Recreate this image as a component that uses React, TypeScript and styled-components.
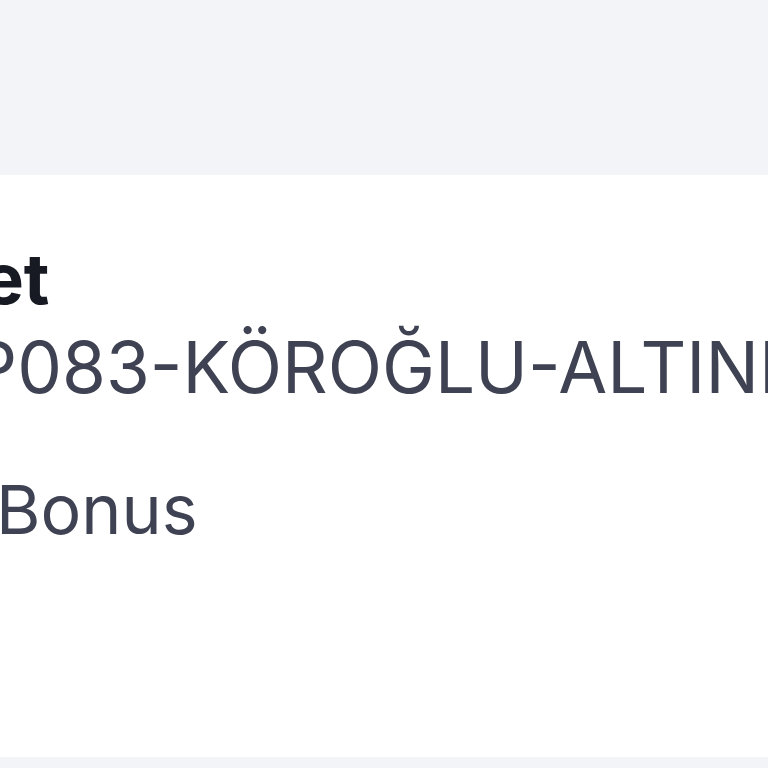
import React from "react";
import styled, { createGlobalStyle } from "styled-components";

const Global = createGlobalStyle`
  html, body { margin: 0; padding: 0; background: #f3f4f8; }
  body { font-family: Inter, "Noto Sans", sans-serif; -webkit-font-smoothing: antialiased; }
`;

const Page = styled.div`
  width: 768px;
  height: 768px;
  overflow: hidden;
  display: flex;
  flex-direction: column;
  padding-top: 175px;
  box-sizing: border-box;
`;

const Card = styled.section`
  background: #ffffff;
  height: 582px;
  display: flex;
  flex-direction: column;
  padding-top: 64px;
  box-sizing: border-box;
  overflow: hidden;
`;

const Label = styled.div`
  font-size: 70px;
  font-weight: 700;
  color: #171923;
  line-height: 80px;
  white-space: nowrap;
  margin-left: -142px;
`;

const Value = styled.div<{ $shift: number; $top: number; $size: number }>`
  font-size: ${(p) => p.$size}px;
  font-weight: 400;
  color: #3e4252;
  line-height: 80px;
  white-space: nowrap;
  margin-left: ${(p) => p.$shift}px;
  margin-top: ${(p) => p.$top}px;
`;

export default function App() {
  return (
    <>
      <Global />
      <Page>
        <Card>
          <Label>Paket</Label>
          <Value $size={71} $shift={-74} $top={8}>TP083-KÖROĞLU-ALTINI</Value>
          <Value $size={68} $shift={-4} $top={62}>Bonus</Value>
        </Card>
      </Page>
    </>
  );
}
